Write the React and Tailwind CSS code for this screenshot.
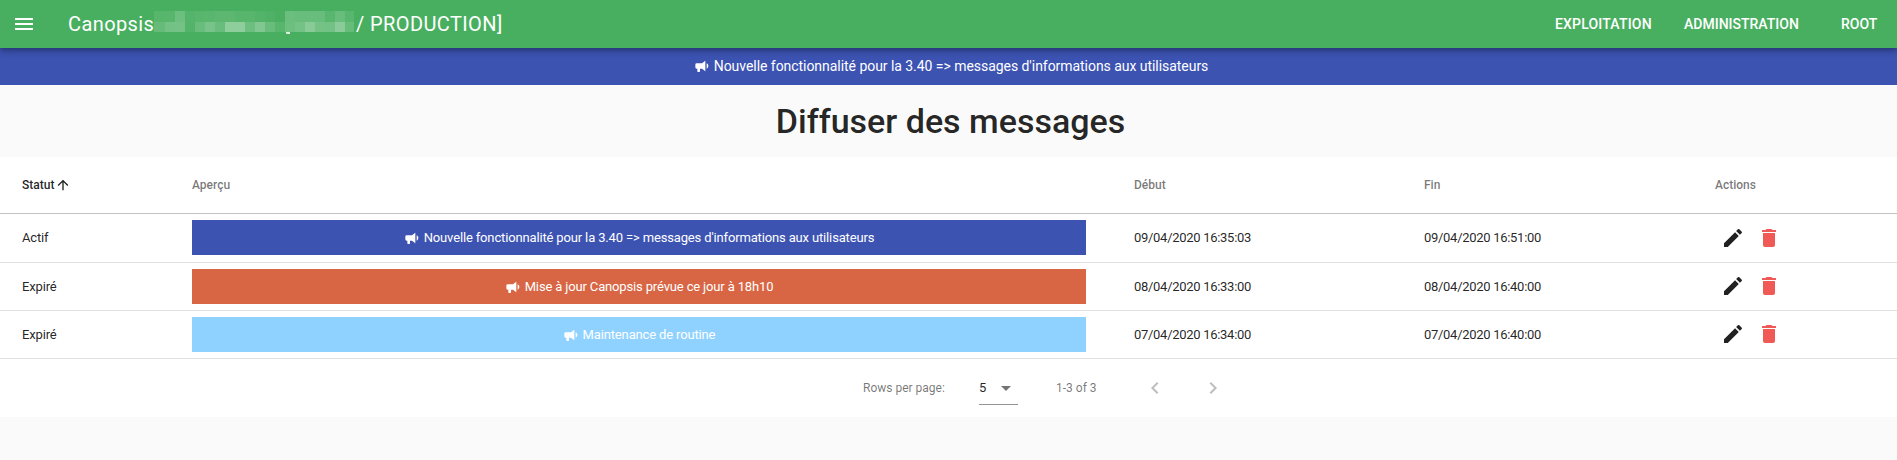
import { MdMenu, MdArrowUpward, MdEdit, MdDelete, MdArrowDropDown, MdChevronLeft, MdChevronRight } from 'react-icons/md';

const MESSAGES = [
  {
    status: 'Actif',
    text: "Nouvelle fonctionnalité pour la 3.40 => messages d'informations aux utilisateurs",
    color: 'bg-[#3c53b2]',
    row: 'h-[49px]',
    bar: 'mb-px',
    icons: '',
    start: '09/04/2020 16:35:03',
    end: '09/04/2020 16:51:00',
  },
  {
    status: 'Expiré',
    text: 'Mise à jour Canopsis prévue ce jour à 18h10',
    color: 'bg-[#d86644]',
    row: 'h-12',
    bar: '',
    icons: 'mb-px',
    start: '08/04/2020 16:33:00',
    end: '08/04/2020 16:40:00',
  },
  {
    status: 'Expiré',
    text: 'Maintenance de routine',
    color: 'bg-[#8fd2ff]',
    row: 'h-12',
    bar: '',
    icons: 'mb-px',
    start: '07/04/2020 16:34:00',
    end: '07/04/2020 16:40:00',
  },
];

// Opacity (in %) of each white tile hiding the instance name.
const MASK = [
  [8, 8, 20, 7, 8, 9, 11, 11, 8, 8, 6, 3, 1, 19, 18, 18, 18, 9, 18, 9],
  [16, 23, 24, 6, 18, 26, 18, 38, 38, 20, 31, 18, 8, 20, 24, 35, 24, 23, 36, 17],
];

const COLS = 'grid grid-cols-[170px_942px_290px_291px_1fr] items-center';

function Bullhorn({ className = '' }) {
  return (
    <svg viewBox="0 0 24 24" className={`size-4 shrink-0 fill-current ${className}`}>
      <path d="M12,8H4A2,2 0 0,0 2,10V14A2,2 0 0,0 4,16H5V20A1,1 0 0,0 6,21H8A1,1 0 0,0 9,20V16H12L17,20V4L12,8M21.5,12C21.5,13.71 20.54,15.26 19,16V8C20.53,8.75 21.5,10.3 21.5,12Z" />
    </svg>
  );
}

function MaskedName() {
  return (
    <span className="relative block h-[21px] w-[200px]">
      {MASK.map((line, r) => (
        <span key={r} className={r === 0 ? 'flex h-[11px]' : 'flex h-[10px]'}>
          {line.map((o, i) => (
            <span key={i} className={i === 0 ? 'w-[11px] bg-white' : i === 19 ? 'w-[9px] bg-white' : 'w-[10px] bg-white'} style={{ opacity: o / 100 }} />
          ))}
        </span>
      ))}
      <span className="absolute top-[21px] left-[132px] h-[2px] w-1 rounded-bl-[1px] bg-white/80" />
    </span>
  );
}

function Header() {
  return (
    <header className="relative z-10 flex h-12 items-center bg-[#49af60] text-white shadow-[0_2px_4px_-1px_rgba(0,0,0,0.2),0_4px_5px_0_rgba(0,0,0,0.14),0_1px_10px_0_rgba(0,0,0,0.12)]">
      <MdMenu className="ml-3 size-6" />
      <div className="ml-8 flex flex-1 items-center text-[20px] leading-[30px] tracking-[0.4px] whitespace-nowrap">
        <span className="w-[86px]">Canopsis</span>
        <span className="-mt-[5px]"><MaskedName /></span>
        <span className="ml-[2px]">/ PRODUCTION]</span>
      </div>
      <nav className="flex text-sm font-medium">
        <span className="w-[129px] tracking-[0.18px]">EXPLOITATION</span>
        <span className="w-[157px]">ADMINISTRATION</span>
        <span className="w-[56px]">ROOT</span>
      </nav>
    </header>
  );
}

export default function App() {
  return (
    <div className="min-h-[460px] w-full overflow-hidden bg-[#fafafa] font-['Roboto',sans-serif] text-black/87">
      <Header />
      <div className="flex h-[37px] items-center justify-center gap-1 bg-[#3c53b2] pb-px pl-[5px] text-sm text-white">
        <Bullhorn />
        <span className="tracking-[-0.045px]">{MESSAGES[0].text}</span>
      </div>
      <h1 className="flex h-[72px] items-center justify-center pl-1 text-[34px] font-medium">Diffuser des messages</h1>

      <main className="h-[260px] bg-white">
        <div className={`${COLS} h-[57px] border-b border-black/24 pb-px pl-[22px] text-xs font-medium text-black/54`}>
          <span className="flex items-center text-black/87">Statut<MdArrowUpward className="ml-px size-4" /></span>
          <span>Aperçu</span>
          <span>Début</span>
          <span>Fin</span>
          <span>Actions</span>
        </div>
        {MESSAGES.map((m) => (
          <div key={m.start} className={`${COLS} ${m.row} border-b border-black/12 pl-[22px] text-[13px]`}>
            <span className="tracking-[-0.15px]">{m.status}</span>
            <div className={`flex h-[35px] w-[894px] items-center justify-center gap-1 text-white ${m.color} ${m.bar}`}>
              <Bullhorn />
              <span className="tracking-[-0.15px]">{m.text}</span>
            </div>
            <span className="tracking-[-0.29px]">{m.start}</span>
            <span className="tracking-[-0.29px]">{m.end}</span>
            <span className={`flex gap-3 pl-[6px] ${m.icons}`}>
              <MdEdit className="size-6" />
              <MdDelete className="size-6 text-[#ef5a57]" />
            </span>
          </div>
        ))}
        <div className="flex h-[58px] items-center pl-[863px] text-xs text-black/54">
          <span className="w-[116px]">Rows per page:</span>
          <div className="mt-[2px] flex h-[31px] w-[39px] items-center border-b border-black/42 pb-px">
            <span className="w-[15px] text-[13px] text-black/87">5</span>
            <MdArrowDropDown className="size-6 shrink-0" />
          </div>
          <span className="ml-[38px] w-[87px]">1-3 of 3</span>
          <MdChevronLeft className="size-6 text-black/26" />
          <MdChevronRight className="ml-[34px] size-6 text-black/26" />
        </div>
      </main>
    </div>
  );
}
